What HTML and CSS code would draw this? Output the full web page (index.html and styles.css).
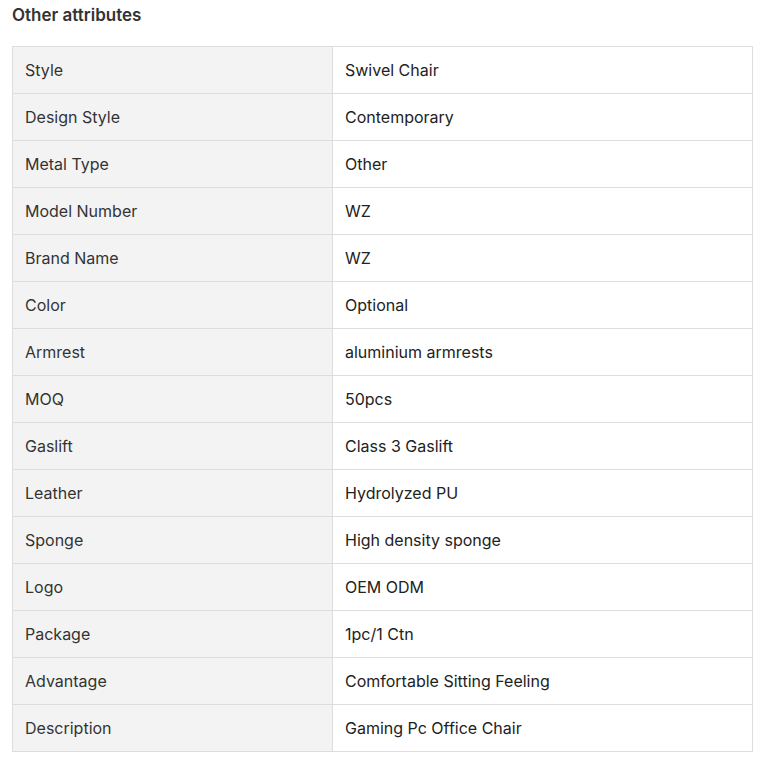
FILE: index.html
```html
<!DOCTYPE html>
<html>
<head>
<meta charset="utf-8">
<link rel="stylesheet" href="styles.css">
</head>
<body>
<div class="wrap">
  <h3 class="title">Other attributes</h3>
  <table class="attrs">
    <tr><td class="k">Style</td><td class="v">Swivel Chair</td></tr>
    <tr><td class="k">Design Style</td><td class="v">Contemporary</td></tr>
    <tr><td class="k">Metal Type</td><td class="v">Other</td></tr>
    <tr><td class="k">Model Number</td><td class="v">WZ</td></tr>
    <tr><td class="k">Brand Name</td><td class="v">WZ</td></tr>
    <tr><td class="k">Color</td><td class="v">Optional</td></tr>
    <tr><td class="k">Armrest</td><td class="v">aluminium armrests</td></tr>
    <tr><td class="k">MOQ</td><td class="v">50pcs</td></tr>
    <tr><td class="k">Gaslift</td><td class="v">Class 3 Gaslift</td></tr>
    <tr><td class="k">Leather</td><td class="v">Hydrolyzed PU</td></tr>
    <tr><td class="k">Sponge</td><td class="v">High density sponge</td></tr>
    <tr><td class="k">Logo</td><td class="v">OEM ODM</td></tr>
    <tr><td class="k">Package</td><td class="v">1pc/1 Ctn</td></tr>
    <tr><td class="k">Advantage</td><td class="v">Comfortable Sitting Feeling</td></tr>
    <tr><td class="k">Description</td><td class="v">Gaming Pc Office Chair</td></tr>
  </table>
</div>
</body>
</html>
```
FILE: styles.css
```css
html, body {
  margin: 0;
  padding: 0;
  background: #fff;
}
.wrap {
  padding: 0 14px 0 12px;
  font-family: Inter, "Noto Sans", sans-serif;
  color: #222;
}
.title {
  margin: 0;
  height: 46px;
  padding-top: 4px;
  box-sizing: border-box;
  font-size: 17px;
  line-height: 22px;
  font-weight: 600;
  color: #333;
}
.attrs {
  width: 741px;
  border-collapse: collapse;
  table-layout: fixed;
  font-size: 16px;
}
.attrs td {
  border: 1px solid #ddd;
  height: 47px;
  box-sizing: border-box;
  padding: 0 12px;
  vertical-align: middle;
  line-height: 20px;
}
.attrs .k {
  width: 320px;
  background: #f3f3f3;
  color: #333;
}
.attrs .v {
  background: #fff;
  color: #222;
}
```
